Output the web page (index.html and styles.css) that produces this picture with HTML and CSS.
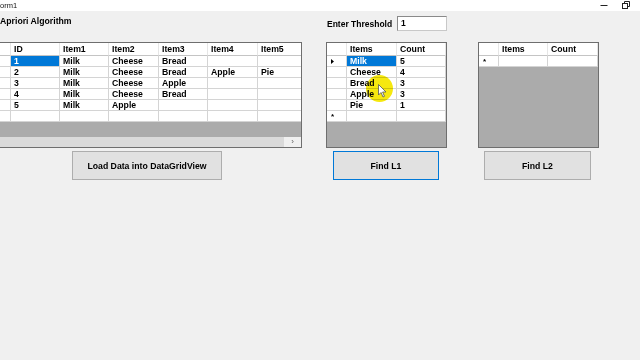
FILE: index.html
```html
<!DOCTYPE html>
<html>
<head>
<meta charset="utf-8">
<link rel="stylesheet" href="styles.css">
</head>
<body>
<div class="window">
  <div class="titlebar">
    <span class="title">orm1</span>
    <div class="controls">
      <svg class="ctl" width="10" height="10" viewBox="0 0 10 10"><path d="M1.5 5.5h7" stroke="#222" stroke-width="1"/></svg>
      <svg class="ctl" width="10" height="10" viewBox="0 0 10 10"><rect x="1.5" y="3.5" width="5" height="5" fill="none" stroke="#222"/><path d="M3.5 3.5V1.5h5v5h-2" fill="none" stroke="#222"/></svg>
    </div>
  </div>
  <div class="client">
    <div class="toprow">
      <div class="heading">Apriori Algorithm</div>
      <div class="threshold">
        <span class="lbl">Enter Threshold</span>
        <div class="tb">1</div>
      </div>
    </div>

    <div class="gridrow">
      <div class="dgv dgv-main">
        <div class="viewport">
          <div class="row hdr cols-main">
            <div class="c rh"></div><div class="c">ID</div><div class="c">Item1</div><div class="c">Item2</div><div class="c">Item3</div><div class="c">Item4</div><div class="c">Item5</div>
          </div>
          <div class="row cols-main">
            <div class="c rh"></div><div class="c sel">1</div><div class="c">Milk</div><div class="c">Cheese</div><div class="c">Bread</div><div class="c"></div><div class="c"></div>
          </div>
          <div class="row cols-main">
            <div class="c rh"></div><div class="c">2</div><div class="c">Milk</div><div class="c">Cheese</div><div class="c">Bread</div><div class="c">Apple</div><div class="c">Pie</div>
          </div>
          <div class="row cols-main">
            <div class="c rh"></div><div class="c">3</div><div class="c">Milk</div><div class="c">Cheese</div><div class="c">Apple</div><div class="c"></div><div class="c"></div>
          </div>
          <div class="row cols-main">
            <div class="c rh"></div><div class="c">4</div><div class="c">Milk</div><div class="c">Cheese</div><div class="c">Bread</div><div class="c"></div><div class="c"></div>
          </div>
          <div class="row cols-main">
            <div class="c rh"></div><div class="c">5</div><div class="c">Milk</div><div class="c">Apple</div><div class="c"></div><div class="c"></div><div class="c"></div>
          </div>
          <div class="row cols-main">
            <div class="c rh"></div><div class="c"></div><div class="c"></div><div class="c"></div><div class="c"></div><div class="c"></div><div class="c"></div>
          </div>
        </div>
        <div class="hscroll"><div class="thumb"></div><div class="arrow">›</div></div>
      </div>

      <div class="dgv dgv-small">
        <div class="viewport">
          <div class="row hdr cols-l1">
            <div class="c rh"></div><div class="c">Items</div><div class="c">Count</div>
          </div>
          <div class="row cols-l1">
            <div class="c rh"><svg width="3" height="5" viewBox="0 0 3 5"><path d="M0 0L3 2.5L0 5Z" fill="#000"/></svg></div><div class="c sel">Milk</div><div class="c">5</div>
          </div>
          <div class="row cols-l1">
            <div class="c rh"></div><div class="c">Cheese</div><div class="c">4</div>
          </div>
          <div class="row cols-l1">
            <div class="c rh"></div><div class="c">Bread</div><div class="c">3</div>
          </div>
          <div class="row cols-l1">
            <div class="c rh"></div><div class="c">Apple</div><div class="c">3</div>
          </div>
          <div class="row cols-l1">
            <div class="c rh"></div><div class="c">Pie</div><div class="c">1</div>
          </div>
          <div class="row cols-l1">
            <div class="c rh star">*</div><div class="c"></div><div class="c"></div>
          </div>
        </div>
      </div>

      <div class="dgv dgv-small dgv-l2">
        <div class="viewport">
          <div class="row hdr cols-l2">
            <div class="c rh"></div><div class="c">Items</div><div class="c">Count</div>
          </div>
          <div class="row cols-l2">
            <div class="c rh star">*</div><div class="c"></div><div class="c"></div>
          </div>
        </div>
      </div>
    </div>

    <div class="btnrow">
      <div class="btn btn-load">Load Data into DataGridView</div>
      <div class="btn btn-l1 focused">Find L1</div>
      <div class="btn btn-l2">Find L2</div>
    </div>

    <div class="spot"></div>
    <svg class="cursor" width="9" height="14" viewBox="0 0 9 14"><path d="M0.5 0.5V11L3 8.5L5 13L6.5 12.3L4.6 8H8Z" fill="#fff" stroke="#555" stroke-width="0.8"/></svg>
  </div>
</div>
</body>
</html>
```

FILE: styles.css
```css
* { box-sizing: border-box; }
html, body { margin: 0; padding: 0; }
body {
  width: 640px;
  height: 360px;
  overflow: hidden;
  background: #f0f0f0;
  font-family: "Liberation Sans", Arial, sans-serif;
  color: #000;
}
.window { width: 640px; height: 360px; display: flex; flex-direction: column; }
.titlebar {
  height: 11px;
  background: #fff;
  display: flex;
  align-items: center;
  justify-content: space-between;
  flex: none;
}
.title { font-size: 7.5px; margin-left: 0; color: #111; }
.controls { display: flex; gap: 12px; margin-right: 9px; margin-top: -1px; }
.ctl { display: block; }
.client { position: relative; flex: 1; background: #f0f0f0; }

.toprow { height: 31px; display: flex; }
.heading {
  width: 327px;
  font-weight: bold;
  font-size: 8.7px;
  padding-top: 5px;
  line-height: 10px;
}
.threshold { display: flex; align-items: center; height: 15px; margin-top: 5px; }
.lbl { font-weight: bold; font-size: 8.5px; line-height: 10px; width: 70px; }
.tb {
  width: 50px;
  height: 15px;
  background: #fff;
  border: 1px solid #9a9a9a;
  border-color: #8a8a8a #c8c8c8 #c8c8c8 #8a8a8a;
  font-weight: bold;
  font-size: 8.5px;
  line-height: 13px;
  padding-left: 3px;
}

.gridrow { display: flex; align-items: flex-start; }
.dgv {
  border: 1px solid #6e6e6e;
  background: #ababab;
  height: 106px;
  overflow: hidden;
  display: flex;
  flex-direction: column;
}
.dgv-main { margin-left: -11px; width: 313px; }
.dgv-small { margin-left: 24px; width: 121px; }
.dgv-l2 { margin-left: 31px; }
.viewport { flex: 1; overflow: hidden; }
.row { display: grid; height: 11px; background: #fff; }
.row.hdr { height: 13px; }
.cols-main { grid-template-columns: 21px 49px 49px 50px 49px 50px 50px; width: 318px; }
.cols-l1 { grid-template-columns: 20px 50px 49px; }
.cols-l2 { grid-template-columns: 20px 49px 50px; }
.c {
  border-right: 1px solid #d4d4d4;
  border-bottom: 1px solid #d4d4d4;
  font-weight: bold;
  font-size: 8.7px;
  line-height: 10px;
  padding-left: 3px;
  white-space: nowrap;
  overflow: hidden;
}
.hdr .c { line-height: 12px; padding-left: 3px; border-right-color: #e6e6e6; border-bottom-color: #c4c4c4; }
.c.sel { background: #0078d7; color: #fff; }
.c.rh { padding-left: 4px; display: flex; align-items: center; }
.c.rh.star { font-size: 8px; line-height: 10px; align-items: flex-start; padding-top: 1px; }

.hscroll { height: 10px; display: flex; background: #f0f0f0; flex: none; }
.thumb { width: 294px; background: #dadada; }
.arrow { flex: 1; font-size: 8px; line-height: 10px; text-align: center; color: #606060; }

.btnrow { display: flex; margin-top: 3px; }
.btn {
  height: 29px;
  background: #e1e1e1;
  border: 1px solid #adadad;
  font-weight: bold;
  font-size: 8.7px;
  display: flex;
  align-items: center;
  justify-content: center;
}
.btn-load { margin-left: 72px; width: 150px; }
.btn-l1 { margin-left: 111px; width: 106px; }
.btn-l2 { margin-left: 45px; width: 107px; }
.btn.focused { border-color: #0078d7; background: #e1e1e1; }

.spot {
  position: absolute;
  left: 366px;
  top: 64px;
  width: 27px;
  height: 27px;
  border-radius: 50%;
  background: #f6e80f;
  mix-blend-mode: multiply;
}
.cursor { position: absolute; left: 378px; top: 73px; }
```
